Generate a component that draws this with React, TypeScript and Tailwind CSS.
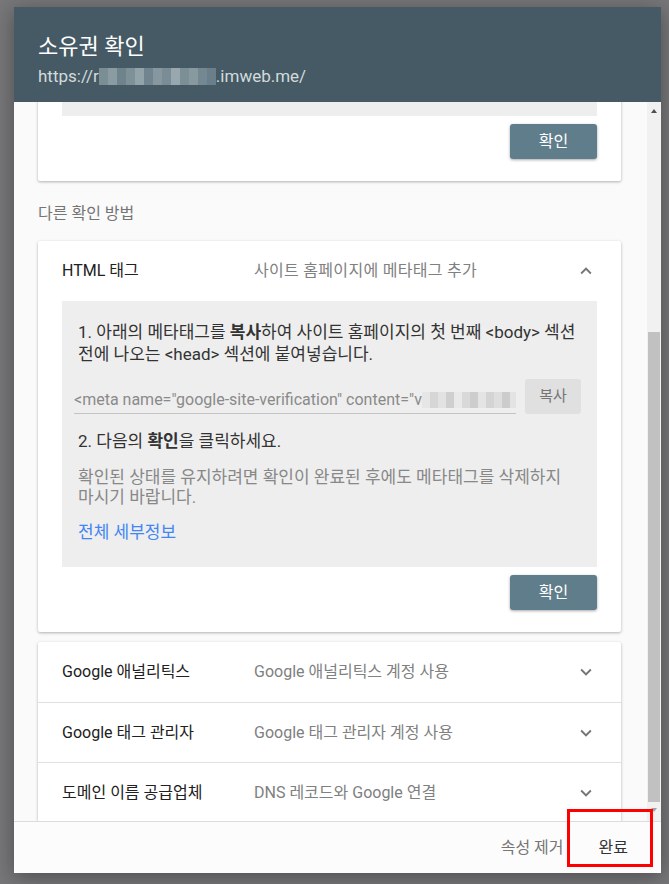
import React from "react";

const font = { fontFamily: "Roboto, 'Noto Sans CJK KR', 'Noto Sans', sans-serif" };

function ChevronDown() {
  return (
    <svg width="22" height="22" viewBox="0 0 24 24" fill="#757575">
      <path d="M7.41 8.59L12 13.17l4.59-4.58L18 10l-6 6-6-6 1.41-1.41z" />
    </svg>
  );
}

function ChevronUp() {
  return (
    <svg width="22" height="22" viewBox="0 0 24 24" fill="#757575">
      <path d="M7.41 15.41L12 10.83l4.59 4.58L18 14l-6-6-6 6z" />
    </svg>
  );
}

function ConfirmButton() {
  return (
    <div className="flex justify-end">
      <button className="w-[87px] h-[35px] rounded-[3px] bg-[#607d8b] text-white text-[16px] shadow-[0_1px_3px_rgba(0,0,0,0.35)]">
        확인
      </button>
    </div>
  );
}

// pixelated blur hiding part of a value
function Mosaic({ cells, w, h }: { cells: string[]; w: number; h: number }) {
  return (
    <span className="inline-flex shrink-0" style={{ height: h }}>
      {cells.map((c, i) => (
        <span key={i} className="h-full" style={{ background: c, width: w }} />
      ))}
    </span>
  );
}

const urlCells = ["#7b8d95", "#8a9ba2", "#6f838c", "#7e9098", "#93a3aa", "#708590", "#8697a0", "#7a8c95", "#98a8ae", "#7c8e96", "#8899a0", "#738891", "#6a7f89"];
const metaCells = ["#e6e6e6", "#d6d6d6", "#e2e2e2", "#cfcfcf", "#e9e9e9", "#d9d9d9", "#cdcdcd", "#e4e4e4", "#d4d4d4", "#dedede", "#cccccc", "#e3e3e3", "#d2d2d2", "#e8e8e8", "#d8d8d8"];

const rows = [
  { title: "Google 애널리틱스", desc: "Google 애널리틱스 계정 사용" },
  { title: "Google 태그 관리자", desc: "Google 태그 관리자 계정 사용" },
  { title: "도메인 이름 공급업체", desc: "DNS 레코드와 Google 연결" },
];

export default function App() {
  return (
    <div className="relative w-[669px] h-[884px] overflow-hidden bg-[#77777a]" style={font}>
      {/* Dialog */}
      <div className="absolute left-[14px] top-[7px] w-[647px] h-[866px] flex flex-col bg-white shadow-[0_4px_20px_rgba(0,0,0,0.35)]">
        {/* Header */}
        <div className="h-[95px] shrink-0 bg-[#455a64] pl-[24px] pt-[25px]">
          <div className="text-white text-[22px] leading-[30px]">소유권 확인</div>
          <div className="text-[#d3dadd] text-[17px] leading-[22px] mt-[3px] flex items-center">
            <span>https://r</span>
            <Mosaic cells={urlCells} w={9} h={17} />
            <span>.imweb.me/</span>
          </div>
        </div>

        {/* Body */}
        <div className="flex-1 flex min-h-0">
          <div className="flex-1 overflow-hidden bg-[#fafafa] pl-[24px] pr-[26px]">
            {/* Top card (scrolled out of view) */}
            <div className="-mt-[60px] bg-white rounded-[2px] shadow-[0_1px_3px_rgba(0,0,0,0.3)] px-[24px] pt-[24px] pb-[22px]">
              <div className="h-[50px] bg-[#eeeeee]" />
              <div className="mt-[8px]">
                <ConfirmButton />
              </div>
            </div>

            <div className="mt-[23px] mb-[17px] text-[16px] leading-[20px] text-[#757575]">다른 확인 방법</div>

            {/* HTML tag card */}
            <div className="bg-white rounded-[2px] shadow-[0_1px_3px_rgba(0,0,0,0.3)] pb-[22px]">
              <div className="h-[60px] flex items-center pl-[24px] pr-[24px]">
                <div className="w-[192px] text-[16px] text-[#212121]">HTML 태그</div>
                <div className="flex-1 text-[16px] text-[#808080] tracking-[0.3px]">사이트 홈페이지에 메타태그 추가</div>
                <ChevronUp />
              </div>
              <div className="mx-[24px] bg-[#eeeeee] pl-[16px] pr-[12px] pt-[20px] pb-[24px]">
                <p className="text-[17px] leading-[22px] text-[#333] whitespace-nowrap">
                  1. 아래의 메타태그를 <b className="font-bold">복사</b>하여 사이트 홈페이지의 첫 번째 &lt;body&gt; 섹션
                  <br />
                  전에 나오는 &lt;head&gt; 섹션에 붙여넣습니다.
                </p>
                <div className="mt-[14px] flex items-end gap-[9px] pr-[4px]">
                  <div className="flex-1 min-w-0 -ml-[4px] border-b border-[#c4c4c4] h-[34px] flex items-center pt-[6px] overflow-hidden whitespace-nowrap text-[16px] leading-[22px] text-[#8a8a8a]">
                    <span className="shrink-0">&lt;meta name="google-site-verification" content="v</span>
                    <Mosaic cells={metaCells} w={8} h={16} />
                  </div>
                  <button className="w-[56px] h-[35px] shrink-0 rounded-[3px] bg-[#e0e0e0] text-[15px] text-[#757575]">복사</button>
                </div>
                <p className="mt-[16px] text-[17px] leading-[22px] text-[#333]">
                  2. 다음의 <b className="font-bold">확인</b>을 클릭하세요.
                </p>
                <p className="mt-[15px] text-[17px] leading-[20px] text-[#888] whitespace-nowrap">
                  확인된 상태를 유지하려면 확인이 완료된 후에도 메타태그를 삭제하지
                  <br />
                  마시기 바랍니다.
                </p>
                <p className="mt-[14px] text-[17px] leading-[22px] text-[#4285f4]">전체 세부정보</p>
              </div>
              <div className="mt-[8px] px-[24px]">
                <ConfirmButton />
              </div>
            </div>

            {/* Other methods */}
            <div className="mt-[10px] bg-white rounded-[2px] shadow-[0_1px_3px_rgba(0,0,0,0.3)]">
              {rows.map((r, i) => (
                <div
                  key={r.title}
                  className={"h-[60px] flex items-center pl-[24px] pr-[24px] " + (i > 0 ? "border-t border-[#e0e0e0]" : "")}
                >
                  <div className="w-[192px] text-[16px] text-[#212121]">{r.title}</div>
                  <div className="flex-1 text-[16px] text-[#808080]">{r.desc}</div>
                  <ChevronDown />
                </div>
              ))}
            </div>
          </div>

          {/* Scrollbar */}
          <div className="w-[14px] shrink-0 bg-[#f1f1f1] flex flex-col items-center">
            <div className="mt-[7px] w-0 h-0 border-l-[3px] border-r-[3px] border-b-[4px] border-l-transparent border-r-transparent border-b-[#505050]" />
            <div className="mt-[219px] w-[12px] h-[470px] bg-[#c1c1c1]" />
            <div className="mt-[6px] w-0 h-0 border-l-[3px] border-r-[3px] border-t-[4px] border-l-transparent border-r-transparent border-t-[#a3a3a3]" />
          </div>
        </div>

        {/* Footer */}
        <div className="h-[52px] shrink-0 border-t border-[#dcdcdc] bg-[#fcfcfc] flex items-center justify-end pr-[33px] gap-[35px]">
          <span className="text-[16px] text-[#757575]">속성 제거</span>
          <span className="text-[16px] text-[#333]">완료</span>
        </div>
      </div>

      {/* Annotation highlight */}
      <div className="absolute left-[567px] top-[809px] w-[86px] h-[58px] border-[3px] border-[#ff0000]" />
    </div>
  );
}
